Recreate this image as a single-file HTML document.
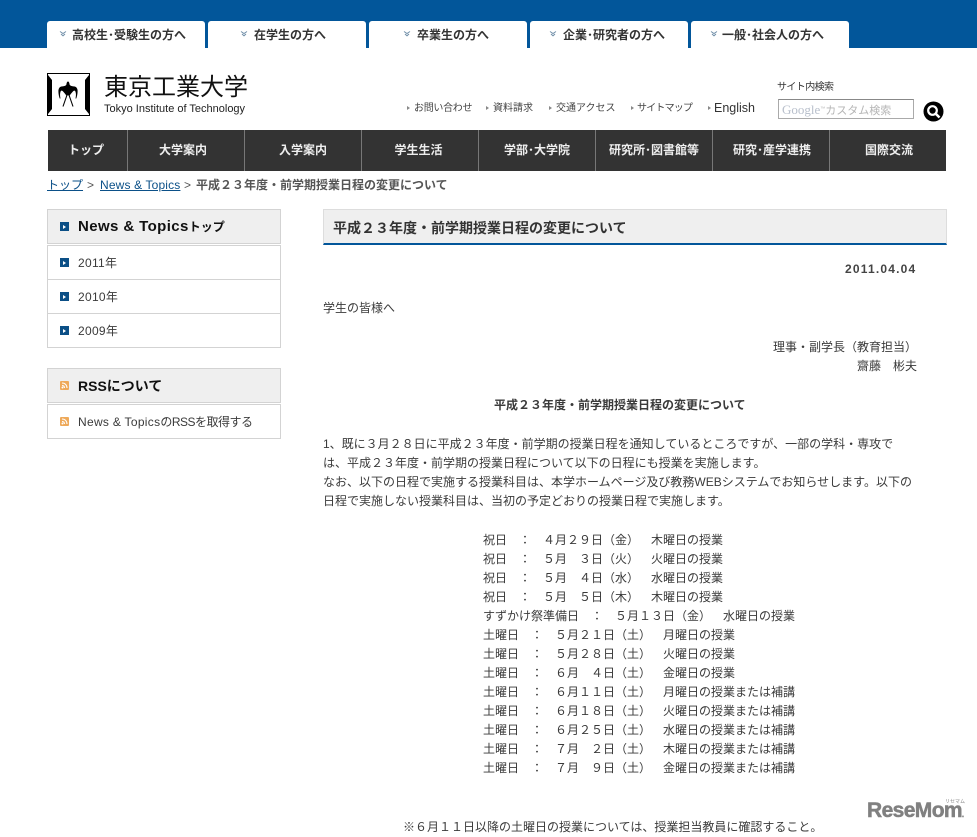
<!DOCTYPE html>
<html lang="ja"><head><meta charset="utf-8"><title>平成23年度・前学期授業日程の変更について</title>
<style>
html,body{margin:0;padding:0;background:#fff}
body{position:relative;width:977px;height:834px;overflow:hidden;font:12px/20px "Liberation Sans","Noto Sans CJK JP",sans-serif;color:#3a3a3a;text-spacing-trim:space-all}
.a{position:absolute;white-space:pre}
.tab{position:absolute;top:21px;width:158px;height:27px;background:#fff;border-radius:3px 3px 0 0;font-weight:bold;font-size:12px;line-height:28px;color:#333;white-space:pre}
.tab span{position:absolute;top:0}
.nav{position:absolute;top:130px;height:41px;background:#333;color:#eee;font-weight:bold;font-size:12px;line-height:40px;text-align:center;box-sizing:border-box;border-right:1px solid #777;white-space:pre}
.sq{position:absolute;left:60px;width:9px;height:9px;background:#0b4f86}
.sq:after{content:"";position:absolute;left:3px;top:2.500px;border-left:3px solid #fff;border-top:2px solid transparent;border-bottom:2px solid transparent}
.box{position:absolute;left:47px;width:234px;box-sizing:border-box;border:1px solid #d3d3d3}
.hd{background:#efefef}
.sm{font-size:10px;color:#444}
.dot{position:absolute;width:0;height:0;border-left:3px solid #888;border-top:2px solid transparent;border-bottom:2px solid transparent}
.chev{position:absolute;top:10px}
.l{letter-spacing:.3px}
</style></head><body>
<div class="a" style="left:0;top:0;width:977px;height:48px;background:#02569a"></div>
<div class="tab" style="left:47px"><svg class="chev" style="left:12px" width="8" height="6" viewBox="0 0 8 6"><path d="M1 .5l3 2 3-2M2 3l2 1.800L6 3" fill="none" stroke="#6f8ea8" stroke-width="1"/></svg><span style="left:25px">高校生･受験生の方へ</span></div>
<div class="tab" style="left:208px"><svg class="chev" style="left:32px" width="8" height="6" viewBox="0 0 8 6"><path d="M1 .5l3 2 3-2M2 3l2 1.800L6 3" fill="none" stroke="#6f8ea8" stroke-width="1"/></svg><span style="left:46px">在学生の方へ</span></div>
<div class="tab" style="left:369px"><svg class="chev" style="left:34px" width="8" height="6" viewBox="0 0 8 6"><path d="M1 .5l3 2 3-2M2 3l2 1.800L6 3" fill="none" stroke="#6f8ea8" stroke-width="1"/></svg><span style="left:48px">卒業生の方へ</span></div>
<div class="tab" style="left:530px"><svg class="chev" style="left:19px" width="8" height="6" viewBox="0 0 8 6"><path d="M1 .5l3 2 3-2M2 3l2 1.800L6 3" fill="none" stroke="#6f8ea8" stroke-width="1"/></svg><span style="left:33px">企業･研究者の方へ</span></div>
<div class="tab" style="left:691px"><svg class="chev" style="left:19px" width="8" height="6" viewBox="0 0 8 6"><path d="M1 .5l3 2 3-2M2 3l2 1.800L6 3" fill="none" stroke="#6f8ea8" stroke-width="1"/></svg><span style="left:31px">一般･社会人の方へ</span></div>

<svg class="a" style="left:47px;top:73px" width="43" height="43" viewBox="0 0 43 43">
<rect x=".5" y=".5" width="42" height="42" fill="#fff" stroke="#000"/>
<path d="M1 2l4 5v29l-4 5zM42 2l-4 5v29l4 5z" fill="#000"/>
<path d="M21 8.500c-1 0-1.400 1.500-1.600 3-.4 1.500-3 1.800-5 2-2 .3-3 2.400-3 4.500 0 3 .6 5.500 1.300 7.500h.8c-.5-2.500-.8-5 .2-7.300.6-.9 1.500-.7 2.400.3 1.200 1.300 2.400 2.600 3 3.900h3.800c.6-1.300 1.800-2.600 3-3.900.9-1 1.800-1.200 2.400-.3 1 2.300.7 4.800.2 7.300h.8c.7-2 1.300-4.500 1.300-7.500 0-2.100-1-4.200-3-4.500-2-.2-4.600-.5-5-2-.2-1.500-.6-3-1.600-3z" fill="#000"/>
<path d="M20 22l-4 11.500M22 22l4 11.500" fill="none" stroke="#000" stroke-width="1.100"/>
</svg>
<div class="a" style="left:104px;top:73px;font-size:24px;line-height:30px;color:#111">東京工業大学</div>
<div class="a" style="left:104px;top:99px;font-size:11px;line-height:20px;color:#222">Tokyo Institute of Technology</div>

<i class="dot" style="left:407px;top:106px"></i><div class="a sm" style="left:414px;top:99px;letter-spacing:-.3px">お問い合わせ</div>
<i class="dot" style="left:486px;top:106px"></i><div class="a sm" style="left:493px;top:99px">資料請求</div>
<i class="dot" style="left:549px;top:106px"></i><div class="a sm" style="left:556px;top:99px">交通アクセス</div>
<i class="dot" style="left:631px;top:106px"></i><div class="a sm" style="left:637px;top:99px;letter-spacing:-.8px">サイトマップ</div>
<i class="dot" style="left:708px;top:106px"></i><div class="a" style="left:714px;top:98px;font-size:12.500px;color:#333">English</div>

<div class="a sm" style="left:777px;top:78px;color:#333;letter-spacing:-.6px">サイト内検索</div>
<div class="a" style="left:778px;top:99px;width:136px;height:20px;box-sizing:border-box;border:1px solid #aaa;border-top-color:#888;background:#fff;font-size:11px;line-height:19px;color:#b5b5b5;padding-left:3px"><span style="font-family:'Liberation Serif',serif;font-size:13px;color:#b9c0cc">Google</span><span style="font-size:5px;vertical-align:4px">™</span>カスタム検索</div>
<svg class="a" style="left:923px;top:101px" width="21" height="21" viewBox="0 0 21 21"><circle cx="10.500" cy="10.500" r="10" fill="#000"/><circle cx="9.500" cy="9.500" r="4.300" fill="none" stroke="#fff" stroke-width="2.200"/><path d="M13 13l3.500 3.500" stroke="#fff" stroke-width="2.500"/></svg>

<div class="nav" style="left:48px;width:80px;padding-right:3px">トップ</div>
<div class="nav" style="left:128px;width:117px;padding-right:6px">大学案内</div>
<div class="nav" style="left:245px;width:117px">入学案内</div>
<div class="nav" style="left:362px;width:117px;padding-right:3px">学生生活</div>
<div class="nav" style="left:479px;width:117px">学部･大学院</div>
<div class="nav" style="left:596px;width:117px">研究所･図書館等</div>
<div class="nav" style="left:713px;width:117px;padding-left:2px">研究･産学連携</div>
<div class="nav" style="left:830px;width:116px;border-right:0;padding-left:2px">国際交流</div>

<div class="a" style="left:47px;top:175px;color:#0b5088;text-decoration:underline">トップ</div>
<div class="a" style="left:87px;top:175px;color:#555">&gt;</div>
<div class="a" style="left:100px;top:175px;color:#0b5088;text-decoration:underline;letter-spacing:.15px">News &amp; Topics</div>
<div class="a" style="left:184px;top:175px;color:#555">&gt;</div>
<div class="a" style="left:196px;top:175px;color:#555;font-weight:bold">平成２３年度・前学期授業日程の変更について</div>

<div class="box hd" style="top:209px;height:35px"></div>
<div class="box" style="top:245px;height:35px"></div>
<div class="box" style="top:279px;height:35px"></div>
<div class="box" style="top:313px;height:35px"></div>
<i class="sq" style="top:222px"></i><div class="a" style="left:78px;top:217px;font-size:15px;font-weight:bold;color:#111"><span style="letter-spacing:.4px">News &amp; Topics</span><span style="font-size:12px">トップ</span></div>
<i class="sq" style="top:258px"></i><div class="a" style="left:78px;top:253px;letter-spacing:.3px">2011年</div>
<i class="sq" style="top:292px"></i><div class="a" style="left:78px;top:287px;letter-spacing:.3px">2010年</div>
<i class="sq" style="top:326px"></i><div class="a" style="left:78px;top:321px;letter-spacing:.3px">2009年</div>

<div class="box hd" style="top:368px;height:35px"></div>
<div class="box" style="top:404px;height:35px"></div>
<svg class="a" style="left:60px;top:381px" width="9" height="9" viewBox="0 0 9 9"><rect width="9" height="9" rx="1" fill="#eea95a"/><path d="M2 2c3 0 5 2 5 5M2 4.500c1.500 0 2.500 1 2.500 2.500" fill="none" stroke="#fff"/><circle cx="2.500" cy="6.500" r="1" fill="#fff"/></svg>
<div class="a" style="left:78px;top:376px;font-size:14px;font-weight:bold;color:#111">RSSについて</div>
<svg class="a" style="left:60px;top:417px" width="9" height="9" viewBox="0 0 9 9"><rect width="9" height="9" rx="1" fill="#eea95a"/><path d="M2 2c3 0 5 2 5 5M2 4.500c1.500 0 2.500 1 2.500 2.500" fill="none" stroke="#fff"/><circle cx="2.500" cy="6.500" r="1" fill="#fff"/></svg>
<div class="a" style="left:78px;top:412px"><span class="l">News &amp; Topics</span><span style="letter-spacing:-.5px">のRSSを取得する</span></div>

<div class="a" style="left:323px;top:209px;width:624px;height:36px;box-sizing:border-box;background:#efefef;border:1px solid #ddd;border-bottom:2px solid #02569a"></div>
<div class="a" style="left:333px;top:218px;font-size:14px;font-weight:bold;color:#333">平成２３年度・前学期授業日程の変更について</div>

<div class="a" style="left:845px;top:259px;font-weight:bold;letter-spacing:1.200px;color:#444">2011.04.04</div>
<div class="a" style="left:323px;top:298px">学生の皆様へ</div>
<div class="a" style="left:773px;top:337px">理事・副学長（教育担当）</div>
<div class="a" style="left:857px;top:356px">齋藤　彬夫</div>
<div class="a" style="left:494px;top:395px;font-weight:bold">平成２３年度・前学期授業日程の変更について</div>
<div class="a" style="left:323px;top:434px">1、既に３月２８日に平成２３年度・前学期の授業日程を通知しているところですが、一部の学科・専攻で</div>
<div class="a" style="left:323px;top:453px">は、平成２３年度・前学期の授業日程について以下の日程にも授業を実施します。</div>
<div class="a" style="left:323px;top:472px">なお、以下の日程で実施する授業科目は、本学ホームページ及び教務WEBシステムでお知らせします。以下の</div>
<div class="a" style="left:323px;top:491px">日程で実施しない授業科目は、当初の予定どおりの授業日程で実施します。</div>

<div class="a" style="left:483px;top:530px">祝日　：　４月２９日（金）　木曜日の授業</div>
<div class="a" style="left:483px;top:549px">祝日　：　５月　３日（火）　火曜日の授業</div>
<div class="a" style="left:483px;top:568px">祝日　：　５月　４日（水）　水曜日の授業</div>
<div class="a" style="left:483px;top:587px">祝日　：　５月　５日（木）　木曜日の授業</div>
<div class="a" style="left:483px;top:606px">すずかけ祭準備日　：　５月１３日（金）　水曜日の授業</div>
<div class="a" style="left:483px;top:625px">土曜日　：　５月２１日（土）　月曜日の授業</div>
<div class="a" style="left:483px;top:644px">土曜日　：　５月２８日（土）　火曜日の授業</div>
<div class="a" style="left:483px;top:663px">土曜日　：　６月　４日（土）　金曜日の授業</div>
<div class="a" style="left:483px;top:682px">土曜日　：　６月１１日（土）　月曜日の授業または補講</div>
<div class="a" style="left:483px;top:701px">土曜日　：　６月１８日（土）　火曜日の授業または補講</div>
<div class="a" style="left:483px;top:720px">土曜日　：　６月２５日（土）　水曜日の授業または補講</div>
<div class="a" style="left:483px;top:739px">土曜日　：　７月　２日（土）　木曜日の授業または補講</div>
<div class="a" style="left:483px;top:758px">土曜日　：　７月　９日（土）　金曜日の授業または補講</div>
<div class="a" style="left:403px;top:817px">※６月１１日以降の土曜日の授業については、授業担当教員に確認すること。</div>

<div class="a" style="left:867px;top:798px;font-size:21px;line-height:26px;font-weight:bold;color:#808080;letter-spacing:-.6px;-webkit-text-stroke:.5px #808080">ReseMom<span style="font-size:7px">.</span></div>
<div class="a" style="left:945px;top:798px;font-size:5px;line-height:8px;color:#888">リセマム</div>
</body></html>
